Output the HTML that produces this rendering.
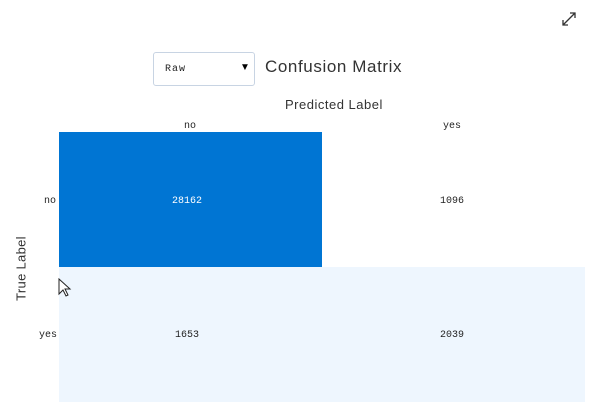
<!DOCTYPE html><html><head><style>
body{margin:0;width:596px;height:417px;background:#fff;font-family:"Liberation Sans",sans-serif;position:relative;overflow:hidden}
.a{position:absolute}
.s{font-family:"Liberation Mono",monospace;font-size:10px;color:#222}
</style></head><body>
<svg class="a" style="left:561px;top:11px" width="16" height="16" viewBox="0 0 16 16" fill="none" stroke="#333" stroke-width="1.3"><path d="M2 14L14 2M9 2h5v5M2 9v5h5"/></svg>
<div class="a" style="left:153px;top:52px;width:102px;height:34px;border:1px solid #c8d4e3;border-radius:3px;box-sizing:border-box"></div>
<div class="a s" style="left:165px;top:64px;letter-spacing:1px">Raw</div>
<div class="a" style="left:240px;top:62px;font-size:10px">▼</div>
<div class="a" style="left:265px;top:57px;font-size:17px;color:#333;letter-spacing:0.6px">Confusion Matrix</div>
<div class="a" style="left:285px;top:97px;font-size:13px;color:#333;letter-spacing:0.5px">Predicted Label</div>
<div class="a s" style="left:184px;top:121px">no</div>
<div class="a s" style="left:443px;top:121px">yes</div>
<div class="a" style="left:59px;top:132px;width:263px;height:135px;background:#0075d3"></div>
<div class="a" style="left:59px;top:267px;width:526px;height:135px;background:#eef6fe"></div>
<div class="a s" style="left:172px;top:196px;color:#fff">28162</div>
<div class="a s" style="left:440px;top:196px">1096</div>
<div class="a s" style="left:175px;top:330px">1653</div>
<div class="a s" style="left:440px;top:330px">2039</div>
<div class="a s" style="left:44px;top:196px">no</div>
<div class="a s" style="left:39px;top:330px">yes</div>
<div class="a" style="left:-14px;top:261px;width:70px;font-size:13px;color:#333;transform:rotate(-90deg);text-align:center;letter-spacing:0.3px">True Label</div>
<svg class="a" style="left:58px;top:278px" width="14" height="20" viewBox="0 0 14 20"><path d="M1 1v15l4-4 3 6 2-1-3-6h5z" fill="#fff" stroke="#222" stroke-width="1"/></svg>
</body></html>
